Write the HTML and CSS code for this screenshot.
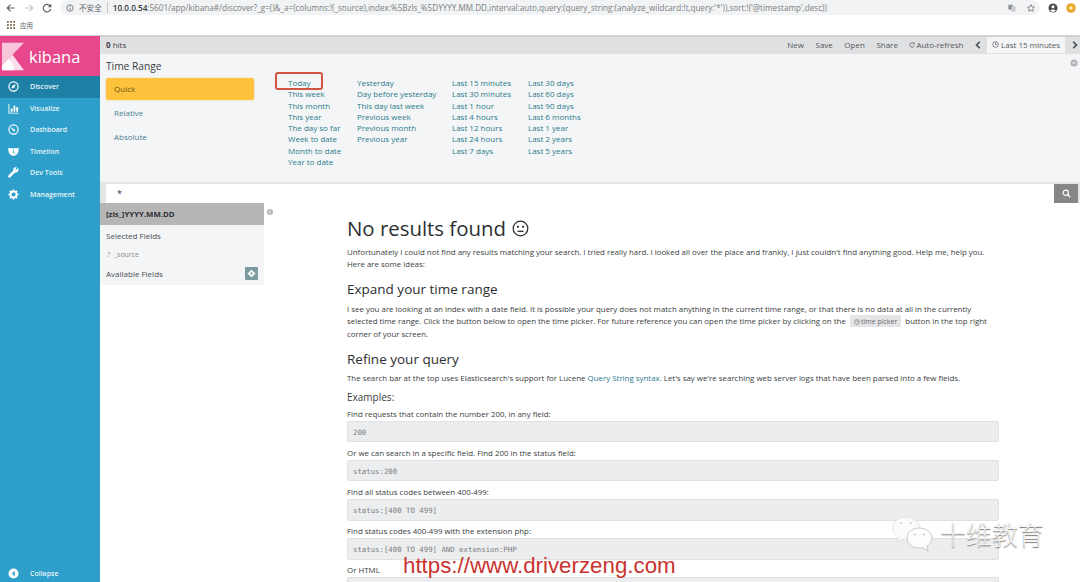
FILE: index.html
```html
<!DOCTYPE html>
<html>
<head>
<meta name="viewport" content="width=device-width, initial-scale=1">
<link rel="stylesheet" href="styles.css">
</head>
<body>

<div class="browser">
  <div class="toolbar">
    <svg class="navicon" viewBox="0 0 12 12"><path d="M10.500 6H2M5.500 2L1.500 6l4 4" fill="none" stroke="#5f6368" stroke-width="1.400"/></svg>
    <svg class="navicon" viewBox="0 0 12 12"><path d="M1.500 6H10M6.500 2l4 4-4 4" fill="none" stroke="#c4c6c9" stroke-width="1.400"/></svg>
    <svg class="navicon" viewBox="0 0 12 12"><path d="M10 4A4.500 4.500 0 1 0 10.500 7M10.500 1.500V4.500H7.500" fill="none" stroke="#5f6368" stroke-width="1.400"/></svg>
    <div class="omnibox">
      <svg class="infoicon" viewBox="0 0 10 10"><circle cx="5" cy="5" r="4" fill="none" stroke="#5f6368"/><path d="M5 4.500V7.500M5 2.500V3.500" stroke="#5f6368"/></svg>
      <span class="insecure">不安全</span>
      <span class="url"><b>10.0.0.54</b>:5601/app/kibana#/discover?_g=()&amp;_a=(columns:!(_source),index:%5Bzls_%5DYYYY.MM.DD,interval:auto,query:(query_string:(analyze_wildcard:!t,query:'*')),sort:!('@timestamp',desc))</span>
      <svg class="omniicon" viewBox="0 0 10 10"><rect x="0.500" y="1" width="5.500" height="6" fill="#8a8d91"/><rect x="4" y="3" width="5.500" height="6.500" fill="#c9cbce"/></svg>
      <svg class="omniicon star" viewBox="0 0 10 10"><path d="M5 .8l1.300 2.800 3 .4-2.200 2.100.6 3L5 7.600 2.300 9.100l.6-3L.7 4l3-.4z" fill="none" stroke="#5f6368" stroke-width=".9"/></svg>
    </div>
    <svg class="avatar" viewBox="0 0 10 10"><circle cx="5" cy="5" r="4.500" fill="#4a4c50"/><circle cx="5" cy="3.800" r="1.500" fill="#fff"/><path d="M2.200 7.500a3.300 2.200 0 0 1 5.600 0 3.500 3.500 0 0 1-5.600 0z" fill="#fff"/></svg>
    <svg class="avatar" viewBox="0 0 10 10"><circle cx="5" cy="5" r="4.800" fill="#e8a92c"/><circle cx="5" cy="5" r="1.800" fill="#fbe9b8"/></svg>
  </div>
  <div class="bookmarks">
    <svg class="appsicon" viewBox="0 0 9 9" fill="#7d6a4c"><rect width="2" height="2"/><rect x="3.500" width="2" height="2"/><rect x="7" width="2" height="2"/><rect y="3.500" width="2" height="2"/><rect x="3.500" y="3.500" width="2" height="2"/><rect x="7" y="3.500" width="2" height="2"/><rect y="7" width="2" height="2"/><rect x="3.500" y="7" width="2" height="2"/><rect x="7" y="7" width="2" height="2"/></svg>
    <span>应用</span>
  </div>
</div>

<div class="kibana">
  <nav class="sidebar">
    <div class="logo">
      <svg class="logomark" viewBox="0 0 24 30">
        <path d="M0 0H24L0 25z" fill="#f9c5db"/>
        <path d="M0 25L11.500 13 24 30H0z" fill="#fbdde9"/>
        <path d="M0 25L7 17.800c4 2 6 7 6 12.200H0z" fill="#fff"/>
      </svg>
      <span>kibana</span>
    </div>
    <a class="navitem active">
      <svg viewBox="0 0 12 12"><circle cx="6" cy="6" r="5" fill="none" stroke="#fff" stroke-width="1.300"/><path d="M8.500 3.500L7 7 3.500 8.500 5 5z" fill="#fff"/></svg>
      Discover
    </a>
    <a class="navitem">
      <svg viewBox="0 0 12 12" fill="#fff"><path d="M.5 1h1v9.500H11.500v1H.5z"/><rect x="3" y="6" width="2" height="3.500"/><rect x="6" y="3" width="2" height="6.500"/><rect x="9" y="4.500" width="2" height="5"/></svg>
      Visualize
    </a>
    <a class="navitem">
      <svg viewBox="0 0 12 12"><circle cx="6" cy="6" r="5" fill="none" stroke="#fff" stroke-width="1.300"/><path d="M3.500 4L6.500 7" stroke="#fff" stroke-width="1.300"/><circle cx="6.500" cy="7" r="1.200" fill="#fff"/></svg>
      Dashboard
    </a>
    <a class="navitem">
      <svg viewBox="0 0 12 12"><path d="M.5 2C2.500 2.800 9.500 2.800 11.500 2c.5 4-.5 8-5.500 9C1 10 0 6 .5 2z" fill="#fff"/><path d="M6 4.500v3l1.500.5" stroke="#2e9fca" fill="none"/></svg>
      Timelion
    </a>
    <a class="navitem">
      <svg viewBox="0 0 12 12"><path d="M11 1.200L8.800 3.200 8 2.400 9.700.6C8 0 6.300.6 5.800 2.200c-.2.700-.1 1.300 0 1.700L.5 9.200c-.6.700-.5 1.500 0 2s1.400.6 2 0L7.800 6c1.900.5 3.700-.9 3.700-2.900 0-.7-.2-1.300-.5-1.900z" fill="#fff"/></svg>
      Dev Tools
    </a>
    <a class="navitem">
      <svg viewBox="0 0 12 12"><circle cx="6" cy="6" r="3.300" fill="none" stroke="#fff" stroke-width="2"/><path d="M6 .5v2M6 9.500v2M.5 6h2M9.500 6h2M2.100 2.100l1.400 1.400M8.500 8.500l1.400 1.400M2.100 9.900l1.400-1.400M8.500 3.500l1.400-1.400" stroke="#fff" stroke-width="1.800"/></svg>
      Management
    </a>
    <a class="navitem collapse">
      <svg viewBox="0 0 12 12"><circle cx="6" cy="6" r="5.500" fill="#fff"/><path d="M7.300 3L4.200 6l3.100 3z" fill="#2e9fca"/></svg>
      Collapse
    </a>
  </nav>

  <div class="content">
    <div class="topnav">
      <span class="hits"><b>0</b> hits</span>
      <div class="menu">
        <a>New</a>
        <a>Save</a>
        <a>Open</a>
        <a>Share</a>
        <a class="refresh"><svg viewBox="0 0 10 10"><path d="M8.500 2.700A3.800 3.800 0 1 0 8.800 6.500M8.800 .8v2.400H6.400" fill="none" stroke="#55585c" stroke-width="1.200"/></svg>Auto-refresh</a>
        <a class="arrow"><svg viewBox="0 0 6 8"><path d="M4.800 .8L1.500 4l3.300 3.200" fill="none" stroke="#4a4d50" stroke-width="1.600"/></svg></a>
        <a class="picker"><svg viewBox="0 0 10 10"><circle cx="5" cy="5" r="4" fill="none" stroke="#55585c"/><path d="M5 2.500V5h2" fill="none" stroke="#55585c"/></svg>Last 15 minutes</a>
        <a class="arrow last"><svg viewBox="0 0 6 8"><path d="M1.200 .8L4.500 4 1.200 7.200" fill="none" stroke="#4a4d50" stroke-width="1.600"/></svg></a>
      </div>
    </div>

    <div class="timepanel">
      <div class="tabs">
        <h3>Time Range</h3>
        <a class="tab selected">Quick</a>
        <a class="tab">Relative</a>
        <a class="tab">Absolute</a>
      </div>
      <div class="quick">
        <ul class="col1">
          <li>Today</li>
          <li>This week</li>
          <li>This month</li>
          <li>This year</li>
          <li>The day so far</li>
          <li>Week to date</li>
          <li>Month to date</li>
          <li>Year to date</li>
        </ul>
        <ul class="col2">
          <li>Yesterday</li>
          <li>Day before yesterday</li>
          <li>This day last week</li>
          <li>Previous week</li>
          <li>Previous month</li>
          <li>Previous year</li>
        </ul>
        <ul class="col3">
          <li>Last 15 minutes</li>
          <li>Last 30 minutes</li>
          <li>Last 1 hour</li>
          <li>Last 4 hours</li>
          <li>Last 12 hours</li>
          <li>Last 24 hours</li>
          <li>Last 7 days</li>
        </ul>
        <ul class="col4">
          <li>Last 30 days</li>
          <li>Last 60 days</li>
          <li>Last 90 days</li>
          <li>Last 6 months</li>
          <li>Last 1 year</li>
          <li>Last 2 years</li>
          <li>Last 5 years</li>
        </ul>
      </div>
      <div class="redbox"></div>
      <svg class="panelclose" viewBox="0 0 10 10"><circle cx="5" cy="5" r="4.500" fill="#b4b6b9"/><path d="M2.800 6L5 3.800 7.200 6" fill="none" stroke="#fff"/></svg>
    </div>

    <div class="searchbar">
      <div class="searchinput">*</div>
      <button class="searchbtn"><svg viewBox="0 0 10 10"><circle cx="4.200" cy="4.200" r="2.900" fill="none" stroke="#fff" stroke-width="1.300"/><path d="M6.400 6.400L9 9" stroke="#fff" stroke-width="1.500"/></svg></button>
    </div>

    <div class="discover">
      <aside class="fields">
        <div class="indexname">[zls_]YYYY.MM.DD</div>
        <div class="fieldtitle">Selected Fields</div>
        <div class="fieldrow"><i>?</i> _source</div>
        <div class="fieldtitle avail">Available Fields
          <span class="gearbtn"><svg viewBox="0 0 12 12"><circle cx="6" cy="6" r="1.800" fill="none" stroke="#fff" stroke-width="1.500"/><path d="M6 2.500v1.500M6 8v1.500M2.500 6h1.500M8 6h1.500" stroke="#fff" stroke-width="1.200"/></svg></span>
        </div>
      </aside>
      <svg class="sideclose" viewBox="0 0 10 10"><circle cx="5" cy="5" r="3.800" fill="#b4b6b9"/><path d="M5.800 3L3.800 5l2 2" fill="none" stroke="#fff"/></svg>

      <main class="results">
        <h1>No results found <svg class="meh" viewBox="0 0 20 20"><circle cx="10" cy="10" r="8.600" fill="none" stroke="#2d2d2d" stroke-width="1.500"/><circle cx="7" cy="8" r="1.300" fill="#2d2d2d"/><circle cx="13" cy="8" r="1.300" fill="#2d2d2d"/><path d="M6.500 13.300h7" stroke="#2d2d2d" stroke-width="1.500"/></svg></h1>
        <p>Unfortunately I could not find any results matching your search. I tried really hard. I looked all over the place and frankly, I just couldn't find anything good. Help me, help you. Here are some ideas:</p>
        <h2>Expand your time range</h2>
        <p>I see you are looking at an index with a date field. It is possible your query does not match anything in the current time range, or that there is no data at all in the currently selected time range. Click the button below to open the time picker. For future reference you can open the time picker by clicking on the <span class="kbd"><svg viewBox="0 0 10 10"><circle cx="5" cy="5" r="4" fill="none" stroke="#6a6c70"/><path d="M5 2.500V5h2" fill="none" stroke="#6a6c70"/></svg>time picker</span> button in the top right corner of your screen.</p>
        <h2 class="refine">Refine your query</h2>
        <p>The search bar at the top uses Elasticsearch's support for Lucene <a class="link">Query String syntax</a>. Let's say we're searching web server logs that have been parsed into a few fields.</p>
        <h4>Examples:</h4>
        <p class="label">Find requests that contain the number 200, in any field:</p>
        <pre>200</pre>
        <p class="label">Or we can search in a specific field. Find 200 in the status field:</p>
        <pre>status:200</pre>
        <p class="label">Find all status codes between 400-499:</p>
        <pre>status:[400 TO 499]</pre>
        <p class="label">Find status codes 400-499 with the extension php:</p>
        <pre>status:[400 TO 499] AND extension:PHP</pre>
        <p class="label">Or HTML</p>
        <pre></pre>
      </main>
    </div>
  </div>
</div>

<!-- stuff stamped on top of the screenshot -->
<div class="siteurl">https://www.driverzeng.com</div>
<div class="wechat">
  <svg viewBox="0 0 44 36">
    <path d="M14 1C7 1 1 5.500 1 12c0 4 2.200 7 5.500 9L5 26l6-3c1.500.4 3 .5 4.500.5 7 0 12.500-5 12.500-11S21 1 14 1z" fill="#fbfbfb" stroke="#d5d5d5" stroke-width=".6"/>
    <path d="M27 12c-6.600 0-12 4.300-12 10s5.400 10 12 10c1.300 0 2.600-.2 3.800-.5L36 35l-1-5c3-2 5-4.800 5-8 0-5.700-6.400-10-13-10z" fill="#fdfdfd" stroke="#bdbdbd" stroke-width=".8"/>
    <path d="M8 6.500l1.500 1M18 6.500l1.500 1M22 18l1.500 1M31 18l1.500 1" stroke="#9a9a9a"/>
  </svg>
  <span>十维教育</span>
</div>

</body>
</html>
```

FILE: styles.css
```css
* {
  box-sizing: border-box;
}

html, body {
  height: 100%;
}

body {
  margin: 0;
  width: 1080px;
  height: 582px;
  overflow: hidden;
  position: relative;
  font-family: "Open Sans", "Noto Sans CJK SC", sans-serif;
  font-size: 8px;
  color: #3f4245;
  background: #fff;
}

/* browser chrome */
.browser {
  height: 35px;
  background: #fff;
}

.toolbar {
  height: 15px;
  display: flex;
  align-items: center;
  padding: 0 4px 0 6px;
}

.navicon {
  width: 10px;
  height: 10px;
  margin-right: 8px;
}

.omnibox {
  flex: 1;
  min-width: 0;
  height: 15px;
  padding: 0 5px 0 6px;
  background: #f1f3f4;
  border-radius: 8px;
  display: flex;
  align-items: center;
  overflow: hidden;
  color: #7b7e82;
}

.infoicon {
  width: 8px;
  height: 8px;
  flex: none;
}

.insecure {
  flex: none;
  margin: 0 5px;
  padding-right: 5px;
  color: #5f6368;
  font-size: 7.600px;
  border-right: 1px solid #c6c8cb;
}

.url {
  flex: 1;
  white-space: nowrap;
  overflow: hidden;
  font-size: 8.130px;
}

.url b {
  font-weight: 600;
  color: #33363a;
}

.omniicon {
  width: 8px;
  height: 8px;
  flex: none;
}

.omniicon.star {
  margin-left: 11px;
}

.avatar {
  width: 10px;
  height: 10px;
  margin-left: 8px;
  flex: none;
}

.bookmarks {
  height: 20px;
  padding: 0 0 0 7px;
  display: flex;
  align-items: center;
  font-size: 6.500px;
  color: #5c5f63;
}

.appsicon {
  width: 8px;
  height: 8px;
  margin-right: 5px;
}

/* kibana */
.kibana {
  display: flex;
  height: 547px;
}

.sidebar {
  width: 100px;
  flex: none;
  background: #2e9fca;
  display: flex;
  flex-direction: column;
  border-top: 1px solid #d0d2d4;
}

.logo {
  height: 40px;
  flex: none;
  background: #e8488b;
  display: flex;
  align-items: center;
  padding-left: 2px;
  color: #fff;
  font-size: 16.500px;
}

.logomark {
  width: 22px;
  height: 29px;
  margin-right: 5px;
}

.navitem {
  height: 21.500px;
  flex: none;
  display: flex;
  align-items: center;
  padding-left: 8px;
  color: #e6f4f9;
  font-size: 7px;
  font-weight: 600;
}

.navitem svg {
  width: 11px;
  height: 11px;
  margin-right: 11px;
  flex: none;
}

.navitem.active {
  background: #1f80a6;
}

.navitem.collapse {
  margin-top: auto;
  height: 18px;
}

.content {
  flex: 1;
  min-width: 0;
  display: flex;
  flex-direction: column;
}

.topnav {
  height: 19px;
  flex: none;
  background: #dfe0e2;
  border-top: 2px solid #cfd1d3;
  display: flex;
  align-items: flex-start;
  justify-content: space-between;
  padding-left: 6px;
  line-height: 15px;
}

.hits b {
  font-weight: 700;
}

.menu {
  display: flex;
  align-items: stretch;
  height: 16px;
  color: #55585c;
}

.menu a {
  display: flex;
  align-items: center;
  height: 15px;
  margin-left: 11.500px;
}

.menu svg {
  width: 7px;
  height: 7px;
  margin-right: 2px;
}

.menu .refresh svg {
  width: 6px;
  height: 6px;
  margin-right: 1px;
}

.menu .arrow svg {
  width: 6px;
  height: 8px;
  margin: 0;
}

.menu .picker {
  height: 16px;
  background: #f4f5f6;
  margin-left: 6px;
  padding: 0 5px 1px;
}

.menu .last {
  margin-left: 7px;
  margin-right: 2px;
}

.timepanel {
  position: relative;
  height: 128px;
  flex: none;
  background: #f4f5f6;
  display: flex;
  padding: 6px 6px 0;
}

.tabs {
  width: 148px;
  flex: none;
}

.tabs h3 {
  margin: 0;
  height: 18px;
  font-size: 10.200px;
  font-weight: 400;
  line-height: 13px;
  color: #3c3f42;
}

.tab {
  display: flex;
  align-items: center;
  height: 22px;
  padding: 0 0 1px 8px;
  margin-bottom: 1.800px;
  color: #4a7f95;
  border-radius: 2px;
}

.tab.selected {
  background: #fec33c;
  color: #6b5516;
  box-shadow: 0 0 2px #f3d588;
}

.quick {
  display: flex;
  padding-top: 17px;
  margin-left: 34px;
  color: #2b7c8c;
}

.quick ul {
  list-style: none;
  margin: 0;
  padding: 0;
  line-height: 11.300px;
}

.col1 { width: 69px; }
.col2 { width: 95px; }
.col3 { width: 76px; }

.redbox {
  position: absolute;
  left: 175px;
  top: 18px;
  width: 48px;
  height: 18px;
  border: 2px solid #d2553f;
  border-radius: 3px;
}

.panelclose {
  position: absolute;
  right: 2px;
  top: 5px;
  width: 8px;
  height: 8px;
}

.searchbar {
  height: 21px;
  flex: none;
  background: #e4e5e7;
  display: flex;
  padding: 2px 2px 0 6px;
}

.searchinput {
  flex: 1;
  background: #fff;
  padding: 3px 0 0 11px;
  font-size: 9px;
  color: #333;
}

.searchbtn {
  width: 24px;
  border: 0;
  padding: 0;
  background: #858687;
  display: flex;
  align-items: center;
  justify-content: center;
}

.searchbtn svg {
  width: 9px;
  height: 9px;
}

.discover {
  flex: 1;
  min-height: 0;
  display: flex;
  position: relative;
  overflow: hidden;
}

.fields {
  width: 164px;
  height: 82px;
  flex: none;
  background: #f4f5f6;
}

.indexname {
  height: 22px;
  background: #b6b6b7;
  padding-left: 6px;
  display: flex;
  align-items: center;
  font-weight: 700;
  font-size: 7.800px;
  color: #2f3134;
}

.fieldtitle {
  height: 22px;
  padding: 0 0 1px 6px;
  display: flex;
  align-items: center;
  color: #4a4d50;
}

.fieldrow {
  height: 15px;
  padding-left: 7px;
  display: flex;
  align-items: center;
  font-size: 7px;
  color: #8a8c8f;
}

.fieldrow i {
  margin-right: 4px;
}

.avail {
  justify-content: space-between;
  padding: 0 6px 0 6px;
}

.gearbtn {
  width: 13px;
  height: 13px;
  background: #7e9aa1;
  border-radius: 1px;
  display: flex;
}

.sideclose {
  width: 8px;
  height: 8px;
  margin: 5px 0 0 2px;
  flex: none;
}

.results {
  width: 725px;
  flex: none;
  padding: 11.500px 0 0 73px;
  font-size: 7.900px;
  color: #3b3e41;
}

.results h1 {
  margin: 0;
  height: 27px;
  font-size: 20.400px;
  line-height: 27px;
  font-weight: 400;
  color: #2d2f31;
  display: flex;
  align-items: center;
}

.meh {
  width: 17px;
  height: 17px;
  margin-left: 6px;
}

.results p {
  margin: 0;
  line-height: 12px;
}

.results h1 + p {
  margin-top: 4px;
}

.results h2 {
  margin: 9.500px 0 3.500px;
  font-size: 13.500px;
  line-height: 20px;
  font-weight: 400;
  color: #2d2f31;
}

.results h2.refine {
  margin-bottom: 2.500px;
}

.results h4 {
  margin: 7px 0 5px;
  font-size: 10px;
  line-height: 13px;
  font-weight: 400;
}

.results .label {
  line-height: 11px;
  height: 11px;
}

.link {
  color: #2b7c8c;
}

.kbd {
  background: #e4e5e7;
  padding: 1.500px 4px;
  margin: 0 2px;
  font-size: 7px;
  color: #6a6c70;
  border-radius: 1px;
}

.kbd svg {
  width: 6px;
  height: 6px;
  margin-right: 1px;
  vertical-align: -1px;
}

.results pre {
  margin: 1px 0 5.500px;
  height: 21.700px;
  padding: 0 5px;
  background: #ecedef;
  border: 1px solid #dfe0e2;
  border-radius: 2px;
  line-height: 21px;
  font-family: "DejaVu Sans Mono", monospace;
  font-size: 7.350px;
  color: #7a7d81;
}

/* stuff on top of the screenshot */
.siteurl {
  position: absolute;
  left: 403px;
  top: 552px;
  font-family: "Liberation Sans", sans-serif;
  font-size: 22.300px;
  line-height: 28px;
  color: #c9332f;
}

.wechat {
  position: absolute;
  left: 892px;
  top: 515px;
  display: flex;
  align-items: center;
}

.wechat svg {
  width: 44px;
  height: 36px;
}

.wechat span {
  margin-left: 4px;
  font-family: "Noto Sans CJK SC", sans-serif;
  font-weight: 300;
  font-size: 26px;
  color: #f4f4f4;
  text-shadow: 0 1px 1px #777;
}
```
